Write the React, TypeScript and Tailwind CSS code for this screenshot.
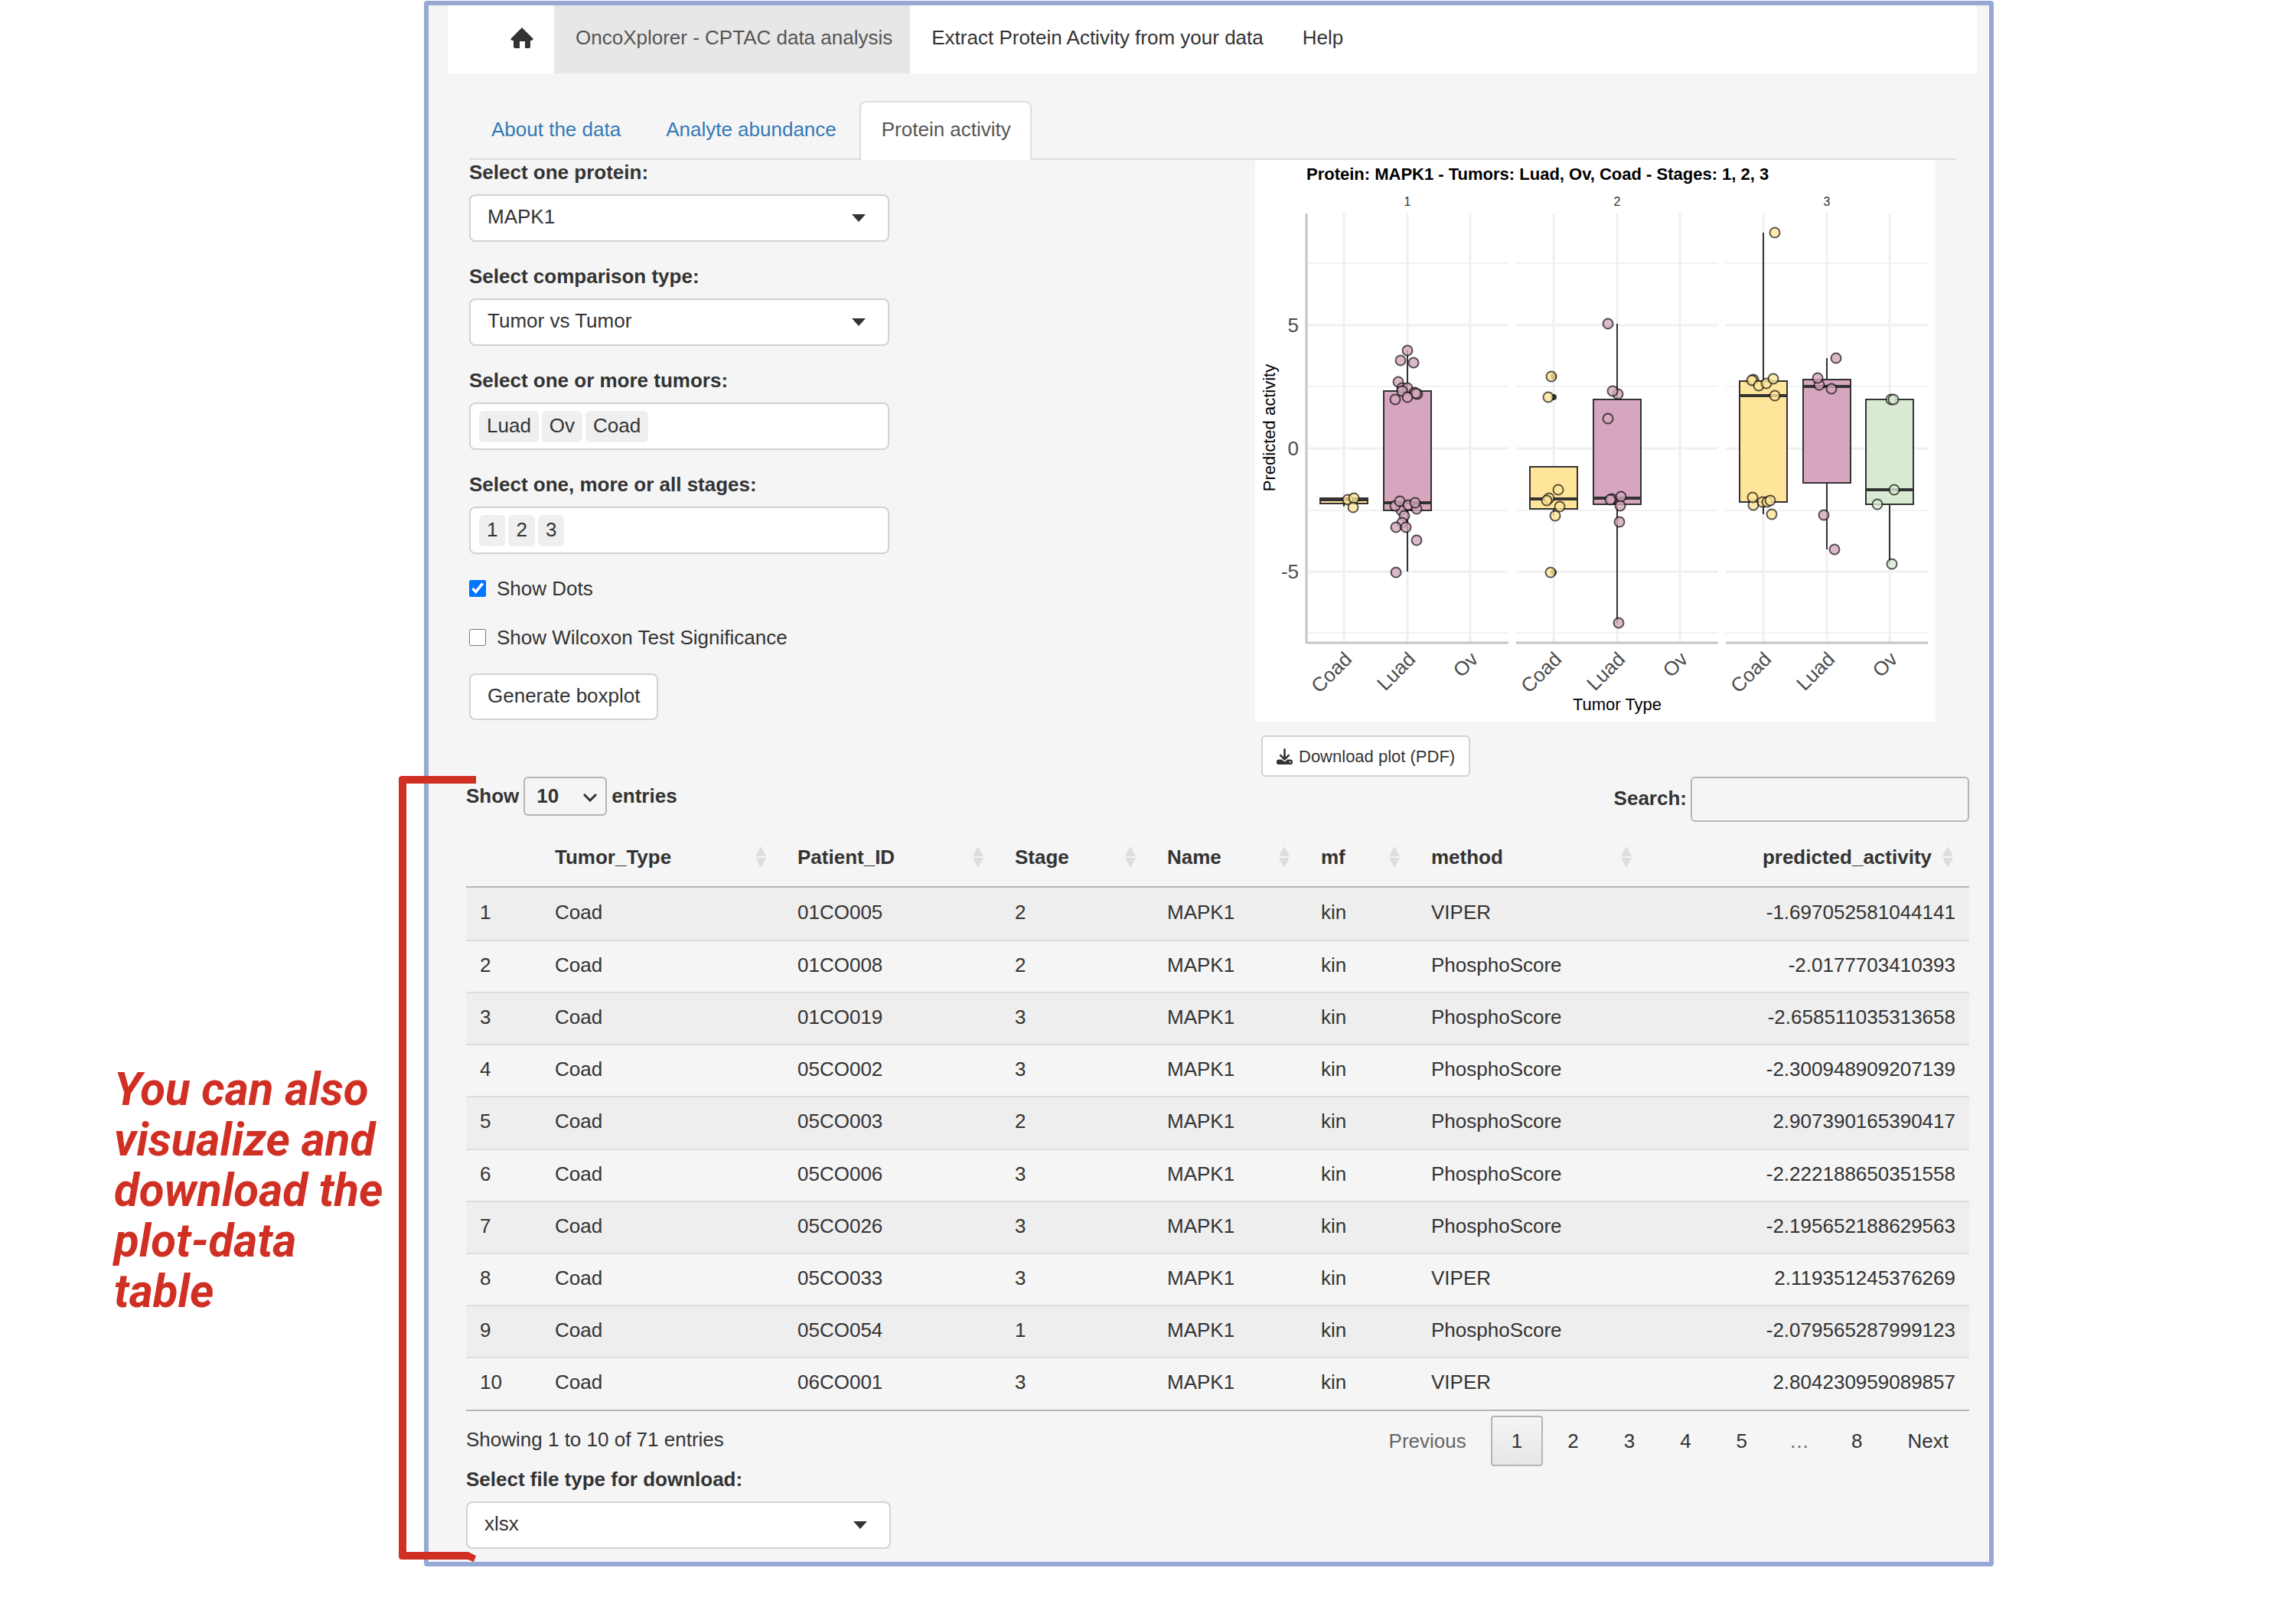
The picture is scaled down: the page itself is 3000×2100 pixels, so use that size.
import React, { useState } from 'react';
import { FaDownload } from 'react-icons/fa6';

interface ActivityRow {
  patient: string;
  stage: number;
  method: string;
  activity: string;
}

interface BoxGroup {
  tumor: 'Coad' | 'Luad' | 'Ov';
  // pixel rows inside the plot: whisker top, box top, median, box bottom, whisker bottom
  box?: [number, number, number, number, number];
  outliers?: number[];
  // jittered dots as [offset from the group centre, row]
  dots: [number, number][];
}

const rows: ActivityRow[] = [
  { patient: '01CO005', stage: 2, method: 'VIPER', activity: '-1.697052581044141' },
  { patient: '01CO008', stage: 2, method: 'PhosphoScore', activity: '-2.0177703410393' },
  { patient: '01CO019', stage: 3, method: 'PhosphoScore', activity: '-2.658511035313658' },
  { patient: '05CO002', stage: 3, method: 'PhosphoScore', activity: '-2.300948909207139' },
  { patient: '05CO003', stage: 2, method: 'PhosphoScore', activity: '2.907390165390417' },
  { patient: '05CO006', stage: 3, method: 'PhosphoScore', activity: '-2.222188650351558' },
  { patient: '05CO026', stage: 3, method: 'PhosphoScore', activity: '-2.195652188629563' },
  { patient: '05CO033', stage: 3, method: 'VIPER', activity: '2.119351245376269' },
  { patient: '05CO054', stage: 1, method: 'PhosphoScore', activity: '-2.079565287999123' },
  { patient: '06CO001', stage: 3, method: 'VIPER', activity: '2.804230959089857' }
];

const columns = ['Tumor_Type', 'Patient_ID', 'Stage', 'Name', 'mf', 'method'];

const tumorColors = { Coad: '#ffe599', Luad: '#d5a6bd', Ov: '#d9ead3' };
const tumorOffsets = { Coad: 49, Luad: 132, Ov: 214 };

const facets: { stage: number; x: number; groups: BoxGroup[] }[] = [
  {
    stage: 1,
    x: 67,
    groups: [
      { tumor: 'Coad', box: [442, 442, 444, 449, 453], dots: [[5, 444], [13, 442], [12, 454]] },
      {
        tumor: 'Luad',
        box: [249, 302, 448, 458, 538],
        dots: [
          [0, 249], [-9, 262], [8, 265], [-12, 290], [-7, 298], [0, 298], [-7, 302], [9, 304], [13, 306],
          [11, 305], [0, 310], [-16, 313], [-8, 458], [-16, 452], [-10, 446], [1, 451], [12, 456], [10, 448],
          [-4, 465], [-7, 474], [-15, 480], [-2, 480], [12, 497], [-15, 539]
        ]
      },
      { tumor: 'Ov', dots: [] }
    ]
  },
  {
    stage: 2,
    x: 341,
    groups: [
      {
        tumor: 'Coad',
        box: [401, 401, 443, 456, 465],
        outliers: [283, 310, 539],
        dots: [[-3, 283], [-7, 310], [6, 431], [-6, 442], [-9, 445], [8, 453], [2, 465], [-4, 539]]
      },
      {
        tumor: 'Luad',
        box: [214, 313, 442, 450, 605],
        dots: [
          [-12, 214], [1, 306], [-6, 302], [-12, 338], [-7, 443], [-9, 444], [5, 440], [4, 452], [3, 473], [2, 605]
        ]
      },
      { tumor: 'Ov', dots: [] }
    ]
  },
  {
    stage: 3,
    x: 615,
    groups: [
      {
        tumor: 'Coad',
        box: [95, 289, 308, 447, 463],
        dots: [
          [15, 95], [-13, 287], [-15, 288], [-6, 295], [4, 292], [13, 286], [15, 308], [-13, 451], [-14, 441],
          [-1, 447], [5, 447], [9, 445], [11, 463]
        ]
      },
      {
        tumor: 'Luad',
        box: [259, 287, 296, 422, 509],
        dots: [[12, 259], [-10, 294], [-12, 285], [6, 299], [-4, 464], [10, 509]]
      },
      {
        tumor: 'Ov',
        box: [313, 313, 431, 450, 528],
        dots: [[2, 313], [5, 313], [6, 431], [-16, 450], [3, 528]]
      }
    ]
  }
];

function HomeIcon() {
  return (
    <svg viewBox="0 0 30 27" className="w-[30px] h-[27px]" fill="#333333" aria-hidden="true">
      <path d="M15 0 L22 7 L30 15 L28 17 H26 V25 Q26 27 24 27 H19 V18 H12 V27 H6 Q4 27 4 25 V17 H2 L0 15 Z" />
    </svg>
  );
}

function SortIcon() {
  return (
    <svg viewBox="0 0 14 28" className="w-[14px] h-7 shrink-0" fill="#dddddd" aria-hidden="true">
      <path d="M7 0 L14 13 H0 Z M0 15 H14 L7 28 Z" />
    </svg>
  );
}

interface SelectFieldProps {
  id: string;
  label: string;
  value: string;
}

function SelectField({ id, label, value }: SelectFieldProps) {
  return (
    <div>
      <label htmlFor={id} className="block font-bold leading-8 mb-[13px]">
        {label}
      </label>
      <div className="relative">
        <select
          id={id}
          defaultValue={value}
          className="block w-full h-[62px] px-[22px] pb-1 appearance-none bg-white border-2 border-[#d2d2d2] rounded-lg"
        >
          <option>{value}</option>
        </select>
        <svg
          viewBox="0 0 18 10"
          className="absolute right-[31px] top-[26px] w-[18px] h-[10px] pointer-events-none"
          fill="#333333"
          aria-hidden="true"
        >
          <path d="M0 0 H18 L9 10 Z" />
        </svg>
      </div>
    </div>
  );
}

interface TagFieldProps {
  id: string;
  label: string;
  tags: string[];
}

function TagField({ id, label, tags }: TagFieldProps) {
  return (
    <div>
      <label htmlFor={id} className="block font-bold leading-8 mb-[13px]">
        {label}
      </label>
      <div className="flex items-center gap-1 h-[62px] px-[11px] bg-white border-2 border-[#d2d2d2] rounded-lg">
        {tags.map(tag => (
          <span key={tag} className="h-[41px] px-[10px] leading-[39px] bg-[#efefef] rounded-md">
            {tag}
          </span>
        ))}
        <input id={id} type="text" className="flex-1 min-w-0 bg-transparent outline-none" />
      </div>
    </div>
  );
}

function BoxPlot() {
  return (
    <svg viewBox="0 0 889 734" className="block w-full bg-white" role="img" aria-label="Predicted activity by tumor type">
      <text x="67" y="26" fontSize="22" fontWeight="bold" fill="#000000">
        Protein: MAPK1 - Tumors: Luad, Ov, Coad - Stages: 1, 2, 3
      </text>

      {facets.map(facet => (
        <g key={facet.stage}>
          <text x={facet.x + 132} y="60" fontSize="16" textAnchor="middle" fill="#333333">
            {facet.stage}
          </text>
          {[135, 296, 458, 618].map(y => (
            <line key={y} x1={facet.x} x2={facet.x + 264} y1={y} y2={y} stroke="#f2f2f2" strokeWidth="2" />
          ))}
          {[216, 377, 538].map(y => (
            <line key={y} x1={facet.x} x2={facet.x + 264} y1={y} y2={y} stroke="#f0f0f0" strokeWidth="3" />
          ))}
          {facet.groups.map(({ tumor }) => {
            const cx = facet.x + tumorOffsets[tumor];
            return <line key={tumor} x1={cx} x2={cx} y1="70" y2="631" stroke="#f0f0f0" strokeWidth="3" />;
          })}
          <line x1={facet.x} x2={facet.x + 264} y1="631" y2="631" stroke="#c4c4c4" strokeWidth="3" />

          {facet.groups.map(({ tumor, box, outliers = [], dots }) => {
            const cx = facet.x + tumorOffsets[tumor];
            return (
              <g key={tumor}>
                {outliers.map(y => (
                  <circle key={y} cx={cx} cy={y} r="4" fill="#333333" />
                ))}
                {box && (
                  <g stroke="#333333">
                    <line x1={cx} x2={cx} y1={box[0]} y2={box[1]} strokeWidth="2" />
                    <line x1={cx} x2={cx} y1={box[3]} y2={box[4]} strokeWidth="2" />
                    <rect
                      x={cx - 31}
                      y={box[1]}
                      width="62"
                      height={box[3] - box[1]}
                      fill={tumorColors[tumor]}
                      strokeWidth="2"
                    />
                    <line x1={cx - 31} x2={cx + 31} y1={box[2]} y2={box[2]} strokeWidth="4" />
                  </g>
                )}
                {dots.map(([dx, y], i) => (
                  <circle
                    key={i}
                    cx={cx + dx}
                    cy={y}
                    r="6.5"
                    fill={tumorColors[tumor]}
                    stroke="#000000"
                    strokeWidth="2"
                    fillOpacity="0.8"
                    strokeOpacity="0.65"
                  />
                ))}
                <text
                  x={cx + 12}
                  y="654"
                  fontSize="26"
                  textAnchor="end"
                  fill="#4d4d4d"
                  transform={`rotate(-45 ${cx + 12} 654)`}
                >
                  {tumor}
                </text>
              </g>
            );
          })}
        </g>
      ))}

      <line x1="67" x2="67" y1="70" y2="632" stroke="#c4c4c4" strokeWidth="3" />
      <g fontSize="26" textAnchor="end" fill="#4d4d4d">
        <text x="57" y="225">5</text>
        <text x="57" y="386">0</text>
        <text x="57" y="547">-5</text>
      </g>
      <text x="26" y="350" fontSize="22" textAnchor="middle" fill="#000000" transform="rotate(-90 26 350)">
        Predicted activity
      </text>
      <text x="473" y="719" fontSize="22" textAnchor="middle" fill="#000000">
        Tumor Type
      </text>
    </svg>
  );
}

export default function App() {
  const [showDots, setShowDots] = useState(true);
  const [showWilcoxon, setShowWilcoxon] = useState(false);
  const [search, setSearch] = useState('');

  return (
    <div className="min-h-screen flex items-start bg-white pt-px text-[26px] leading-[37px] text-[#333333] font-['Liberation_Sans',Arial,sans-serif]">
      <aside className="w-[554px] shrink-0 pt-[1390px] pl-[149px] pr-10">
        <p className="font-['Roboto',sans-serif] font-bold italic text-[60px] leading-[66px] text-[#d02f24]">
          You can also visualize and download the plot-data table
        </p>
      </aside>

      <main className="flex-1 min-w-0 mr-[395px] bg-[#f5f5f5] border-[6px] border-[#95a9d4] rounded-sm pb-[17px]">
        <nav className="ml-[25px] mr-4 h-[89px] flex bg-white">
          <a href="#home" aria-label="Home" className="flex items-center pl-[82px] pr-[27px] pb-[5px]">
            <HomeIcon />
          </a>
          <a href="#oncoxplorer" className="flex items-center pl-7 pr-[23px] pb-[5px] bg-[#e7e7e7] text-[#555555]">
            OncoXplorer - CPTAC data analysis
          </a>
          <a href="#extract" className="flex items-center pl-7 pr-[23px] pb-[5px]">
            Extract Protein Activity from your data
          </a>
          <a href="#help" className="flex items-center pl-7 pr-[23px] pb-[5px]">
            Help
          </a>
        </nav>

        <div className="ml-[53px] mr-11 mt-9">
          <div className="flex gap-1 border-b-2 border-[#dddddd]">
            <a href="#about" className="pl-[29px] pr-[26px] pt-[19px] pb-[19px] text-[#337ab7]">
              About the data
            </a>
            <a href="#abundance" className="pl-[29px] pr-[26px] pt-[19px] pb-[19px] text-[#337ab7]">
              Analyte abundance
            </a>
            <a
              href="#activity"
              className="-mb-[2px] pl-[27px] pr-[25px] pt-[17px] pb-[21px] bg-white border-2 border-b-0 border-[#dddddd] rounded-t-lg text-[#555555]"
            >
              Protein activity
            </a>
          </div>

          <div className="flex items-start justify-between">
            <form className="w-[549px] flex flex-col gap-[29px]" onSubmit={e => e.preventDefault()}>
              <SelectField id="protein" label="Select one protein:" value="MAPK1" />
              <SelectField id="comparison" label="Select comparison type:" value="Tumor vs Tumor" />
              <TagField id="tumors" label="Select one or more tumors:" tags={['Luad', 'Ov', 'Coad']} />
              <TagField id="stages" label="Select one, more or all stages:" tags={['1', '2', '3']} />
              <div className="flex flex-col gap-8">
                <label className="flex items-center gap-[14px] leading-8">
                  <input
                    type="checkbox"
                    checked={showDots}
                    onChange={e => setShowDots(e.target.checked)}
                    className="size-[22px] accent-[#0075ff]"
                  />
                  Show Dots
                </label>
                <label className="flex items-center gap-[14px] leading-8">
                  <input
                    type="checkbox"
                    checked={showWilcoxon}
                    onChange={e => setShowWilcoxon(e.target.checked)}
                    className="size-[22px] accent-[#0075ff]"
                  />
                  Show Wilcoxon Test Significance
                </label>
              </div>
              <button
                type="submit"
                className="self-start mt-[2px] h-[61px] px-[22px] pb-[2px] bg-white border-2 border-[#d2d2d2] rounded-lg"
              >
                Generate boxplot
              </button>
            </form>

            <section className="w-[889px] mr-[26px]">
              <BoxPlot />
              <button
                type="button"
                className="mt-[18px] ml-2 h-[54px] px-[18px] flex items-center gap-2 bg-white border-2 border-[#d2d2d2] rounded-md text-[22px]"
              >
                <FaDownload className="size-[21px]" />
                Download plot (PDF)
              </button>
            </section>
          </div>
        </div>

        <section className="relative ml-[49px] mr-[26px]">
          <div className="flex items-start justify-between">
            <label className="flex items-center gap-[6px] font-bold">
              Show
              <span className="relative">
                <select
                  defaultValue="10"
                  className="block w-[109px] h-[51px] px-[15px] appearance-none bg-transparent border-2 border-[#b5b5b5] rounded-md"
                >
                  <option>10</option>
                  <option>25</option>
                  <option>50</option>
                </select>
                <svg
                  viewBox="0 0 20 12"
                  className="absolute right-3 top-[21px] w-5 h-3 pointer-events-none"
                  fill="none"
                  stroke="#333333"
                  strokeWidth="3"
                  aria-hidden="true"
                >
                  <path d="M2 2 L10 10 L18 2" />
                </svg>
              </span>
              entries
            </label>
            <label className="flex items-center gap-[5px] font-bold">
              <span className="pb-[2px]">Search:</span>
              <input
                type="search"
                value={search}
                onChange={e => setSearch(e.target.value)}
                className="w-[364px] h-[59px] px-2 border-2 border-[#b5b5b5] rounded-md"
              />
            </label>
          </div>

          <table className="w-full mt-2 table-fixed border-separate border-spacing-0 border-b-2 border-[#b5b5b5]">
            <colgroup>
              <col className="w-[98px]" />
              <col className="w-[317px]" />
              <col className="w-[284px]" />
              <col className="w-[199px]" />
              <col className="w-[201px]" />
              <col className="w-[144px]" />
              <col className="w-[303px]" />
              <col />
            </colgroup>
            <thead>
              <tr>
                <th className="h-[78px] border-b-2 border-[#b5b5b5]" aria-label="Row"></th>
                {columns.map(column => (
                  <th key={column} className="pl-[18px] pr-[23px] border-b-2 border-[#b5b5b5]">
                    <button type="button" className="w-full flex items-center justify-between font-bold">
                      {column}
                      <SortIcon />
                    </button>
                  </th>
                ))}
                <th className="pl-[18px] pr-[21px] border-b-2 border-[#b5b5b5]">
                  <button type="button" className="w-full flex items-center justify-end gap-[14px] font-bold">
                    predicted_activity
                    <SortIcon />
                  </button>
                </th>
              </tr>
            </thead>
            <tbody className="[&>tr:nth-child(odd)]:bg-[#eeeeee] [&>tr+tr>td]:border-t-2 [&_td]:border-[#dddddd] [&_td]:px-[18px] [&_td]:pb-1">
              {rows.map((row, index) => (
                <tr key={row.patient} className="h-[68px] nth-[5n]:h-[69px]">
                  <td>{index + 1}</td>
                  <td>Coad</td>
                  <td>{row.patient}</td>
                  <td>{row.stage}</td>
                  <td>MAPK1</td>
                  <td>kin</td>
                  <td>{row.method}</td>
                  <td className="text-right">{row.activity}</td>
                </tr>
              ))}
            </tbody>
          </table>

          <div className="mt-[6px] flex items-start justify-between">
            <p className="pt-[13px]">Showing 1 to 10 of 71 entries</p>
            <div className="flex items-center gap-[5px] [&>button]:h-[66px] [&>button]:px-[27px]">
              <button type="button" disabled className="text-[#666666]">
                Previous
              </button>
              <button
                type="button"
                className="border-2 border-[#b5b5b5] rounded-sm bg-linear-to-b from-[#f5f5f5] to-[#e6e6e6] [&&]:px-[25px]"
              >
                1
              </button>
              <button type="button">2</button>
              <button type="button">3</button>
              <button type="button">4</button>
              <button type="button">5</button>
              <span className="px-[23px] text-[#666666]">…</span>
              <button type="button">8</button>
              <button type="button">Next</button>
            </div>
          </div>

          <div className="w-[555px] pt-px">
            <SelectField id="filetype" label="Select file type for download:" value="xlsx" />
          </div>

          <svg
            viewBox="0 0 102 1028"
            className="absolute -left-[88px] -top-px w-[102px] h-[1028px] pointer-events-none"
            fill="#d02f24"
            aria-hidden="true"
          >
            <path d="M4 0 H101 V10 H10 V1014 H91 L101 1019 L98 1027 L90 1024 H4 Q0 1024 0 1020 V4 Q0 0 4 0 Z" />
          </svg>
        </section>
      </main>
    </div>
  );
}
